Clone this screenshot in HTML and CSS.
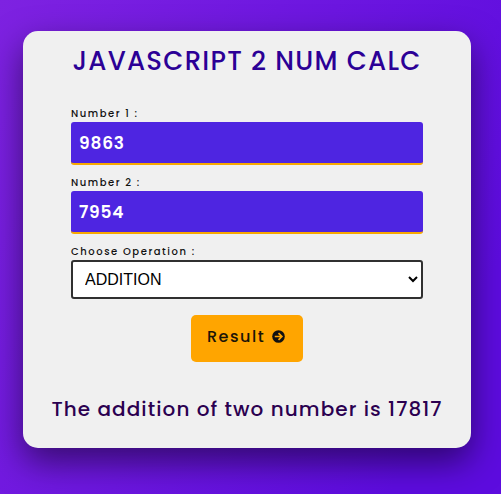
FILE: index.html
```html
<!DOCTYPE html>
<html lang="en">
<head>
<meta charset="utf-8">
<title>JavaScript 2 Num Calc</title>
<link rel="stylesheet" href="styles.css">
</head>
<body>
<main class="card">
  <h1 class="title">JAVASCRIPT 2 NUM CALC</h1>
  <form class="form">
    <label class="label" for="n1">Number 1 :</label>
    <input class="number" id="n1" type="text" value="9863">
    <label class="label label-two" for="n2">Number 2 :</label>
    <input class="number" id="n2" type="text" value="7954">
    <label class="label label-op" for="op">Choose Operation :</label>
    <select class="operation" id="op"><option>ADDITION</option><option>SUBTRACTION</option><option>MULTIPLICATION</option><option>DIVISION</option></select>
    <button class="button" type="button"><span class="button-text">Result</span>
      <svg class="arrow" viewBox="0 0 512 512"><circle cx="256" cy="256" r="248" fill="#111"/><path d="M108 256h280M256 124l132 132-132 132" fill="none" stroke="orange" stroke-width="66"/></svg>
    </button>
  </form>
  <p class="result">The addition of two number is 17817</p>
</main>
</body>
</html>
```
FILE: styles.css
```css
* { box-sizing: border-box; }
body {
  margin: 0;
  height: 494px;
  padding: 31px 30px 46px 23px;
  overflow: hidden;
  background: linear-gradient(115deg, #7e22e1, #5d0cdf 85%);
  font-family: Poppins, Inter, sans-serif;
  font-feature-settings: "cv11";
}
.card {
  width: 448px;
  height: 417px;
  padding-top: 13px;
  border-radius: 15px;
  background: #f0f0f0;
  box-shadow: 0 14px 34px rgba(0, 0, 0, .5);
}
.title {
  margin: 0;
  font-size: 26px;
  line-height: 34px;
  font-weight: 500;
  letter-spacing: 1.25px;
  text-align: center;
  white-space: nowrap;
  color: #2b0096;
}
.form {
  display: flex;
  flex-direction: column;
  width: 352px;
  margin: 27px auto 0;
}
.label {
  height: 17px;
  font-size: 10px;
  line-height: 17px;
  font-weight: 500;
  letter-spacing: 1.55px;
  color: #111;
}
.label-two, .label-op { margin-top: 9px; }
.number {
  height: 43px;
  padding: 0 8px;
  border: 0;
  border-bottom: 2px solid #f8a900;
  border-radius: 3px;
  background: #4e25e1;
  color: #fff;
  font: 600 17px Poppins, Inter, sans-serif;
  letter-spacing: .8px;
}
.operation {
  height: 39px;
  padding: 0 0 0 8px;
  border: 2px solid #303030;
  border-radius: 3px;
  background: #fff;
  color: #000;
  font: 16px "Liberation Sans", Arial, sans-serif;
}
.button {
  display: flex;
  align-self: center;
  align-items: center;
  width: 112px;
  height: 47px;
  margin-top: 16px;
  padding: 0 0 4px 16px;
  border: 0;
  border-radius: 5px;
  background: #ffa500;
  color: #1a1408;
  font: 500 16px Poppins, Inter, sans-serif;
  letter-spacing: 1.5px;
}
.button-text { width: 65px; text-align: left; }
.arrow { width: 13px; height: 13px; }
.result {
  margin: 32px 0 0;
  font-size: 20px;
  line-height: 30px;
  font-weight: 500;
  letter-spacing: 1.07px;
  text-align: center;
  white-space: nowrap;
  color: #2b0050;
}
```
